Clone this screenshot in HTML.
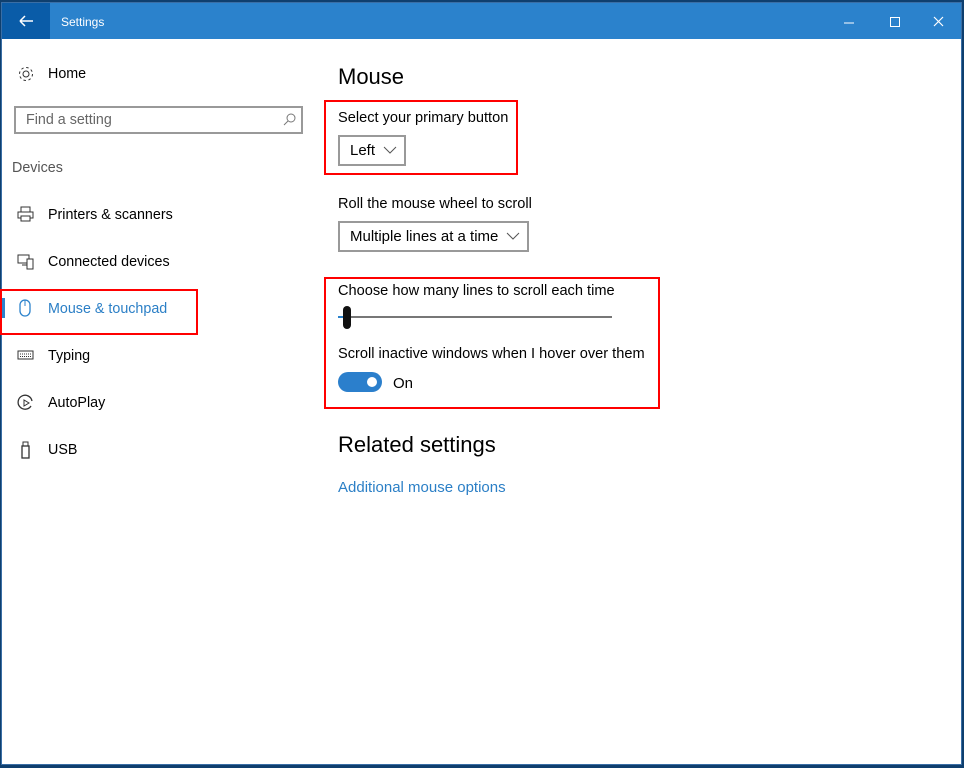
<!DOCTYPE html>
<html><head><style>
*{margin:0;padding:0;box-sizing:border-box}
body{width:964px;height:768px;overflow:hidden;background:#0f3f6e;font-family:"Liberation Sans",sans-serif;position:relative}
.win{position:absolute;left:1px;top:2px;width:961px;height:763px;background:#fff;border:1px solid #3a6ea5}
.title{position:absolute;left:0;top:0;width:100%;height:36px;background:#2b82cc}
.back{position:absolute;left:0;top:0;width:48px;height:36px;background:#0a5ca8;color:#fff}
.t{position:absolute;font-size:15px;color:#000;white-space:nowrap}
.s{font-size:14.3px}
.box{position:absolute;border:2px solid #f00}
</style></head><body>
<div class="win">
<div class="title">
 <div class="back"><svg width="48" height="36"><path d="M18 18h13M18 18l5-5M18 18l5 5" stroke="#fff" stroke-width="1.5" fill="none"/></svg></div>
 <div style="position:absolute;left:59px;top:12px;color:#fff;font-size:12px">Settings</div>
 <svg style="position:absolute;left:830px;top:8px" width="120" height="20"><path d="M12 12h10" stroke="#fff"/><rect x="58.5" y="6.5" width="9" height="9" stroke="#fff" fill="none"/><path d="M102 6l9 9M111 6l-9 9" stroke="#fff" stroke-width="1.2"/></svg>
</div>
</div>
<svg style="position:absolute;left:17px;top:65px" width="18" height="18"><circle cx="9" cy="9" r="3" fill="none" stroke="#333"/><circle cx="9" cy="9" r="6.5" fill="none" stroke="#333" stroke-dasharray="2.5 2.6"/></svg>
<div class="t s" style="left:48px;top:66px">Home</div>
<div style="position:absolute;left:14px;top:106px;width:289px;height:28px;border:2px solid #999"></div>
<div class="t s" style="left:26px;top:112px;color:#666">Find a setting</div>
<svg style="position:absolute;left:282px;top:112px" width="16" height="16"><circle cx="9" cy="6" r="4" fill="none" stroke="#777"/><path d="M6 9l-4 4" stroke="#777"/></svg>
<div class="t s" style="left:12px;top:160px;color:#555">Devices</div>
<svg style="position:absolute;left:16px;top:204px" width="20" height="20"><rect x="5" y="3" width="9" height="5" fill="none" stroke="#333"/><rect x="2" y="8" width="15" height="6" fill="none" stroke="#333"/><rect x="5" y="12" width="9" height="5" fill="#fff" stroke="#333"/></svg>
<div class="t s" style="left:48px;top:207px">Printers &amp; scanners</div>
<svg style="position:absolute;left:16px;top:252px" width="20" height="20"><rect x="2" y="3" width="11" height="8" fill="none" stroke="#333"/><rect x="11" y="7" width="6" height="10" fill="#fff" stroke="#333"/><path d="M6 13h5" stroke="#333"/></svg>
<div class="t s" style="left:48px;top:254px">Connected devices</div>
<div style="position:absolute;left:1px;top:298px;width:4px;height:20px;background:#2b82cc"></div>
<svg style="position:absolute;left:18px;top:298px" width="16" height="20"><rect x="2" y="2" width="10" height="16" rx="5" fill="none" stroke="#2b82cc" stroke-width="1.3"/><path d="M7 2v6" stroke="#2b82cc"/></svg>
<div class="t s" style="left:48px;top:301px;color:#2b7fc6">Mouse &amp; touchpad</div>
<div class="box" style="left:0;top:289px;width:198px;height:46px"></div>
<svg style="position:absolute;left:16px;top:346px" width="20" height="20"><rect x="2" y="5" width="15" height="8" fill="none" stroke="#333"/><path d="M4 8h11M4 10.5h11" stroke="#333" stroke-dasharray="1 1"/></svg>
<div class="t s" style="left:48px;top:348px">Typing</div>
<svg style="position:absolute;left:16px;top:393px" width="20" height="20"><path d="M15 13A7 7 0 1 1 16 8" fill="none" stroke="#333" stroke-width="1.3"/><path d="M8 7v6l5-3z" fill="none" stroke="#333"/></svg>
<div class="t s" style="left:48px;top:395px">AutoPlay</div>
<svg style="position:absolute;left:16px;top:440px" width="20" height="20"><rect x="6" y="6" width="7" height="12" fill="none" stroke="#333" stroke-width="1.3"/><rect x="7" y="2" width="5" height="4" fill="none" stroke="#333"/></svg>
<div class="t s" style="left:48px;top:442px">USB</div>

<div class="t" style="left:338px;top:64px;font-size:22px">Mouse</div>
<div class="box" style="left:324px;top:100px;width:194px;height:75px"></div>
<div class="t" style="left:338px;top:110px;font-size:14.6px">Select your primary button</div>
<div style="position:absolute;left:338px;top:135px;width:68px;height:31px;border:2px solid #999"></div>
<div class="t" style="left:350px;top:142px">Left</div>
<svg style="position:absolute;left:383px;top:145px" width="14" height="10"><path d="M1 2l6 6 6-6" fill="none" stroke="#555"/></svg>
<div class="t" style="left:338px;top:196px;font-size:14.6px">Roll the mouse wheel to scroll</div>
<div style="position:absolute;left:338px;top:221px;width:191px;height:31px;border:2px solid #999"></div>
<div class="t" style="left:350px;top:228px">Multiple lines at a time</div>
<svg style="position:absolute;left:506px;top:231px" width="14" height="10"><path d="M1 2l6 6 6-6" fill="none" stroke="#555"/></svg>
<div class="box" style="left:324px;top:277px;width:336px;height:132px"></div>
<div class="t" style="left:338px;top:283px;font-size:14.6px">Choose how many lines to scroll each time</div>
<div style="position:absolute;left:338px;top:316px;width:274px;height:2px;background:#777"></div>
<div style="position:absolute;left:338px;top:316px;width:6px;height:2px;background:#2b82cc"></div>
<div style="position:absolute;left:343px;top:306px;width:8px;height:23px;background:#111;border-radius:4px"></div>
<div class="t" style="left:338px;top:346px;font-size:14.6px">Scroll inactive windows when I hover over them</div>
<div style="position:absolute;left:338px;top:372px;width:44px;height:20px;background:#2b7fcc;border-radius:10px"></div>
<div style="position:absolute;left:367px;top:377px;width:10px;height:10px;background:#fff;border-radius:5px"></div>
<div class="t" style="left:393px;top:375px">On</div>
<div class="t" style="left:338px;top:432px;font-size:22px">Related settings</div>
<div class="t" style="left:338px;top:479px;color:#2b7fc6">Additional mouse options</div>
</body></html>
